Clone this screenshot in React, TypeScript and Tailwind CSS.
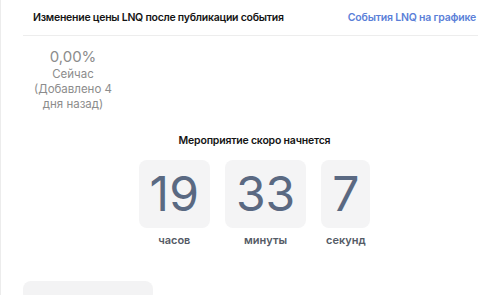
import React from 'react';

const units = [
  { value: '19', label: 'часов' },
  { value: '33', label: 'минуты' },
  { value: '7', label: 'секунд' },
];

const App: React.FC = () => {
  return (
    <div className="w-[500px] h-[295px] overflow-hidden bg-white border-l border-[#ececec] font-['Inter',sans-serif]">
      <div className="px-[22px]">
        <div className="flex items-center justify-between h-[36px] pl-[10px] pr-[2px] border-b border-[#ededed] whitespace-nowrap">
          <h2 className="text-[10.5px] font-semibold tracking-[-0.25px] text-[#141414]">Изменение цены LNQ после публикации события</h2>
          <a className="text-[10.5px] font-semibold tracking-[-0.2px] text-[#5b7fd8]">События LNQ на графике</a>
        </div>

        <div className="w-[100px] flex flex-col items-center text-center mt-[11px]">
          <span className="text-[15px] leading-[20px] text-[#8c8c8c]">0,00%</span>
          <span className="text-[11.5px] leading-[15px] text-[#8c8c8c]">Сейчас</span>
          <span className="text-[11.5px] leading-[15px] text-[#8c8c8c]">(Добавлено 4 дня назад)</span>
        </div>

        <div className="flex flex-col items-center mt-[21px] ml-[8px]">
          <p className="text-[10.5px] font-semibold tracking-[-0.2px] text-[#141414]">Мероприятие скоро начнется</p>
          <div className="flex gap-[15px] mt-[11px]">
            {units.map((u) => (
              <div key={u.label} className="flex flex-col items-center">
                <div className="h-[68px] px-[11px] rounded-[8px] bg-[#f4f4f5] flex items-center justify-center text-[48px] leading-none text-[#5a6982]">
                  {u.value}
                </div>
                <span className="mt-[4px] text-[11px] font-semibold text-[#555b66]">{u.label}</span>
              </div>
            ))}
          </div>
        </div>

        <div className="mt-[33px] w-[130px] h-[20px] rounded-[8px] bg-[#f3f3f4]" />
      </div>
    </div>
  );
};

export default App;
